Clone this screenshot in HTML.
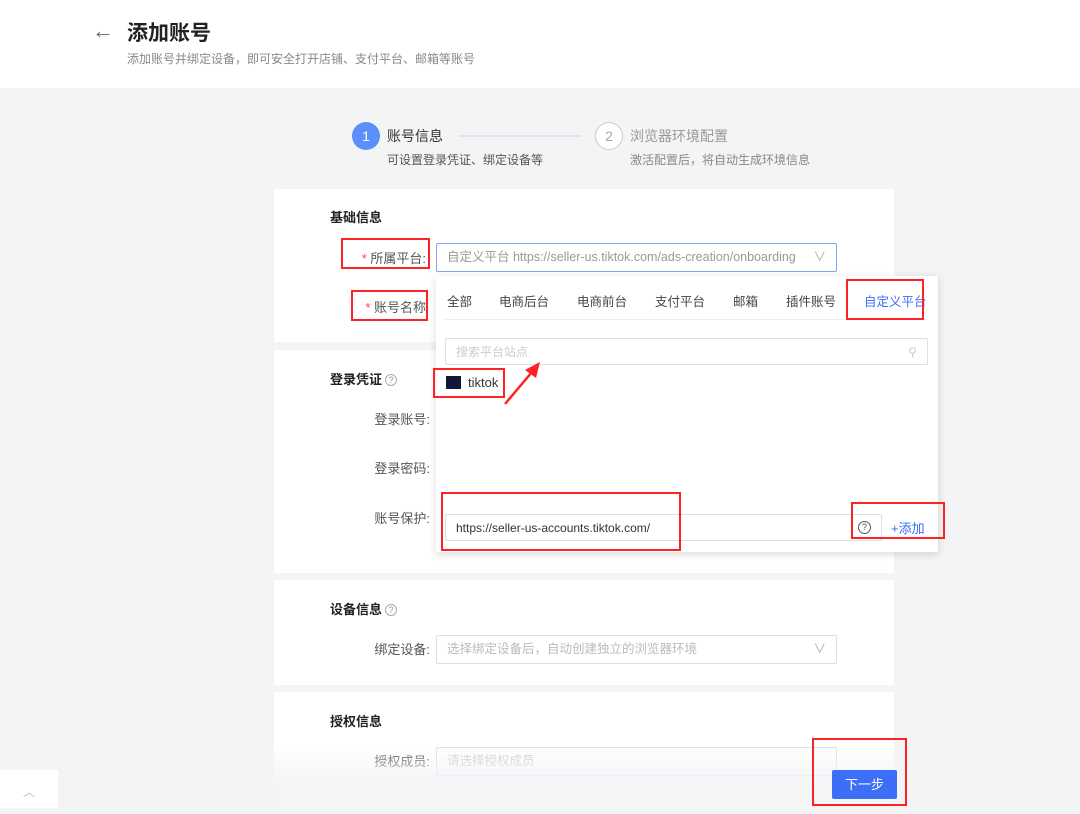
<!DOCTYPE html>
<html><head><meta charset="utf-8"><style>
*{box-sizing:border-box;margin:0;padding:0}
body{width:1080px;height:808px;overflow:hidden;background:#f3f4f6;font-family:"Liberation Sans","Noto Sans CJK SC",sans-serif;position:relative;color:#333}
.a{position:absolute}
.hdr{left:0;top:0;width:1080px;height:88px;background:#fff}
.card{background:#fff;left:274px;width:620px}
.lbl{font-size:13px;color:#555;text-align:right;width:120px}
.sec{font-size:13px;font-weight:bold;color:#222;left:330px}
.inp{border:1px solid #dcdfe6;border-radius:2px;background:#fff;font-size:12.5px;color:#aaa;padding-left:10px;line-height:26px}
.red{border:2px solid #f22;}
.q{display:inline-block;width:12px;height:12px;border:1px solid #aaa;border-radius:50%;font-size:9px;line-height:10px;text-align:center;color:#999;font-weight:normal;vertical-align:1px;margin-left:3px}
.tab{font-size:12.5px;color:#444;top:291px}
</style></head><body>
<div class="a hdr"></div>
<div class="a" style="left:92px;top:18px;font-size:22px;color:#666">←</div>
<div class="a" style="left:127px;top:17px;font-size:21px;font-weight:bold;color:#222">添加账号</div>
<div class="a" style="left:127px;top:50px;font-size:12px;color:#888">添加账号并绑定设备，即可安全打开店铺、支付平台、邮箱等账号</div>

<div class="a" style="left:352px;top:122px;width:28px;height:28px;border-radius:50%;background:#5b8ff9;color:#fff;font-size:14px;text-align:center;line-height:28px">1</div>
<div class="a" style="left:387px;top:126px;font-size:14px;color:#333">账号信息</div>
<div class="a" style="left:459px;top:135px;width:122px;height:2px;background:#e2e4e8"></div>
<div class="a" style="left:595px;top:122px;width:28px;height:28px;border-radius:50%;border:1px solid #ccc;background:#fff;color:#aaa;font-size:14px;text-align:center;line-height:26px">2</div>
<div class="a" style="left:630px;top:126px;font-size:14px;color:#999">浏览器环境配置</div>
<div class="a" style="left:387px;top:151px;font-size:12px;color:#555">可设置登录凭证、绑定设备等</div>
<div class="a" style="left:630px;top:151px;font-size:12px;color:#888">激活配置后，将自动生成环境信息</div>

<div class="a card" style="top:189px;height:153px"></div>
<div class="a card" style="top:350px;height:223px"></div>
<div class="a card" style="top:580px;height:105px"></div>
<div class="a card" style="top:692px;height:116px"></div>

<div class="a sec" style="top:207px">基础信息</div>
<div class="a lbl" style="left:306px;top:248px"><span style="color:#f44">* </span>所属平台:</div>
<div class="a lbl" style="left:306px;top:297px"><span style="color:#f44">* </span>账号名称</div>
<div class="a inp" style="left:436px;top:243px;width:401px;height:29px;border-color:#7fa6f7;color:#999">自定义平台 https://seller-us.tiktok.com/ads-creation/onboarding<span style="position:absolute;right:10px;color:#aaa">∨</span></div>

<div class="a sec" style="top:369px">登录凭证<span class="q">?</span></div>
<div class="a lbl" style="left:310px;top:409px">登录账号:</div>
<div class="a lbl" style="left:310px;top:458px">登录密码:</div>
<div class="a lbl" style="left:310px;top:508px">账号保护:</div>

<div class="a sec" style="top:599px">设备信息<span class="q">?</span></div>
<div class="a lbl" style="left:310px;top:639px">绑定设备:</div>
<div class="a inp" style="left:436px;top:635px;width:401px;height:29px;color:#bbb">选择绑定设备后，自动创建独立的浏览器环境<span style="position:absolute;right:10px;color:#aaa">∨</span></div>

<div class="a sec" style="top:711px">授权信息</div>
<div class="a lbl" style="left:310px;top:751px">授权成员:</div>
<div class="a inp" style="left:436px;top:747px;width:401px;height:29px;color:#ccc">请选择授权成员</div>
<div class="a" style="left:0;top:745px;width:1080px;height:63px;background:linear-gradient(rgba(243,244,246,0),rgba(243,244,246,.9) 60%)"></div>
<div class="a" style="left:0;top:770px;width:58px;height:38px;background:#fff;color:#bbb;text-align:center;font-size:12px;line-height:44px">︿</div>

<!-- dropdown -->
<div class="a" style="left:436px;top:276px;width:502px;height:276px;background:#fff;box-shadow:0 2px 8px rgba(0,0,0,.15)"></div>
<div class="a tab" style="left:447px">全部</div>
<div class="a tab" style="left:499px">电商后台</div>
<div class="a tab" style="left:577px">电商前台</div>
<div class="a tab" style="left:655px">支付平台</div>
<div class="a tab" style="left:733px">邮箱</div>
<div class="a tab" style="left:786px">插件账号</div>
<div class="a tab" style="left:864px;color:#3b6cf6">自定义平台</div>
<div class="a" style="left:445px;top:319px;width:483px;height:1px;background:#eee"></div>
<div class="a inp" style="left:445px;top:338px;width:483px;height:27px;color:#ccc;font-size:12px">搜索平台站点<span style="position:absolute;right:10px;color:#ccc">⚲</span></div>
<div class="a" style="left:446px;top:376px;width:15px;height:13px;background:#111738"></div>
<div class="a" style="left:468px;top:375px;font-size:13px;color:#333">tiktok</div>
<div class="a inp" style="left:445px;top:514px;width:437px;height:27px;color:#333;font-size:12px">https://seller-us-accounts.tiktok.com/</div>
<div class="a" style="left:858px;top:521px;width:13px;height:13px;border:1px solid #555;border-radius:50%;font-size:9px;line-height:11px;text-align:center;color:#555">?</div>
<div class="a" style="left:891px;top:518px;font-size:13px;color:#3b6cf6">+添加</div>

<div class="a" style="left:832px;top:770px;width:65px;height:29px;background:#3d6ef7;border-radius:2px;color:#fff;font-size:13px;text-align:center;line-height:29px">下一步</div>

<!-- red annotations -->
<div class="a red" style="left:341px;top:238px;width:89px;height:31px"></div>
<div class="a red" style="left:351px;top:290px;width:77px;height:31px"></div>
<div class="a red" style="left:846px;top:279px;width:78px;height:41px"></div>
<div class="a red" style="left:433px;top:368px;width:72px;height:30px"></div>
<div class="a red" style="left:441px;top:492px;width:240px;height:59px"></div>
<div class="a red" style="left:851px;top:502px;width:94px;height:37px"></div>
<div class="a red" style="left:812px;top:738px;width:95px;height:68px"></div>
<svg class="a" style="left:500px;top:358px" width="45" height="50"><path d="M5 46 L32 14" stroke="#f22" stroke-width="2.5"/><path d="M40 4 L25 12 L36 20 Z" fill="#f22"/></svg>
</body></html>
